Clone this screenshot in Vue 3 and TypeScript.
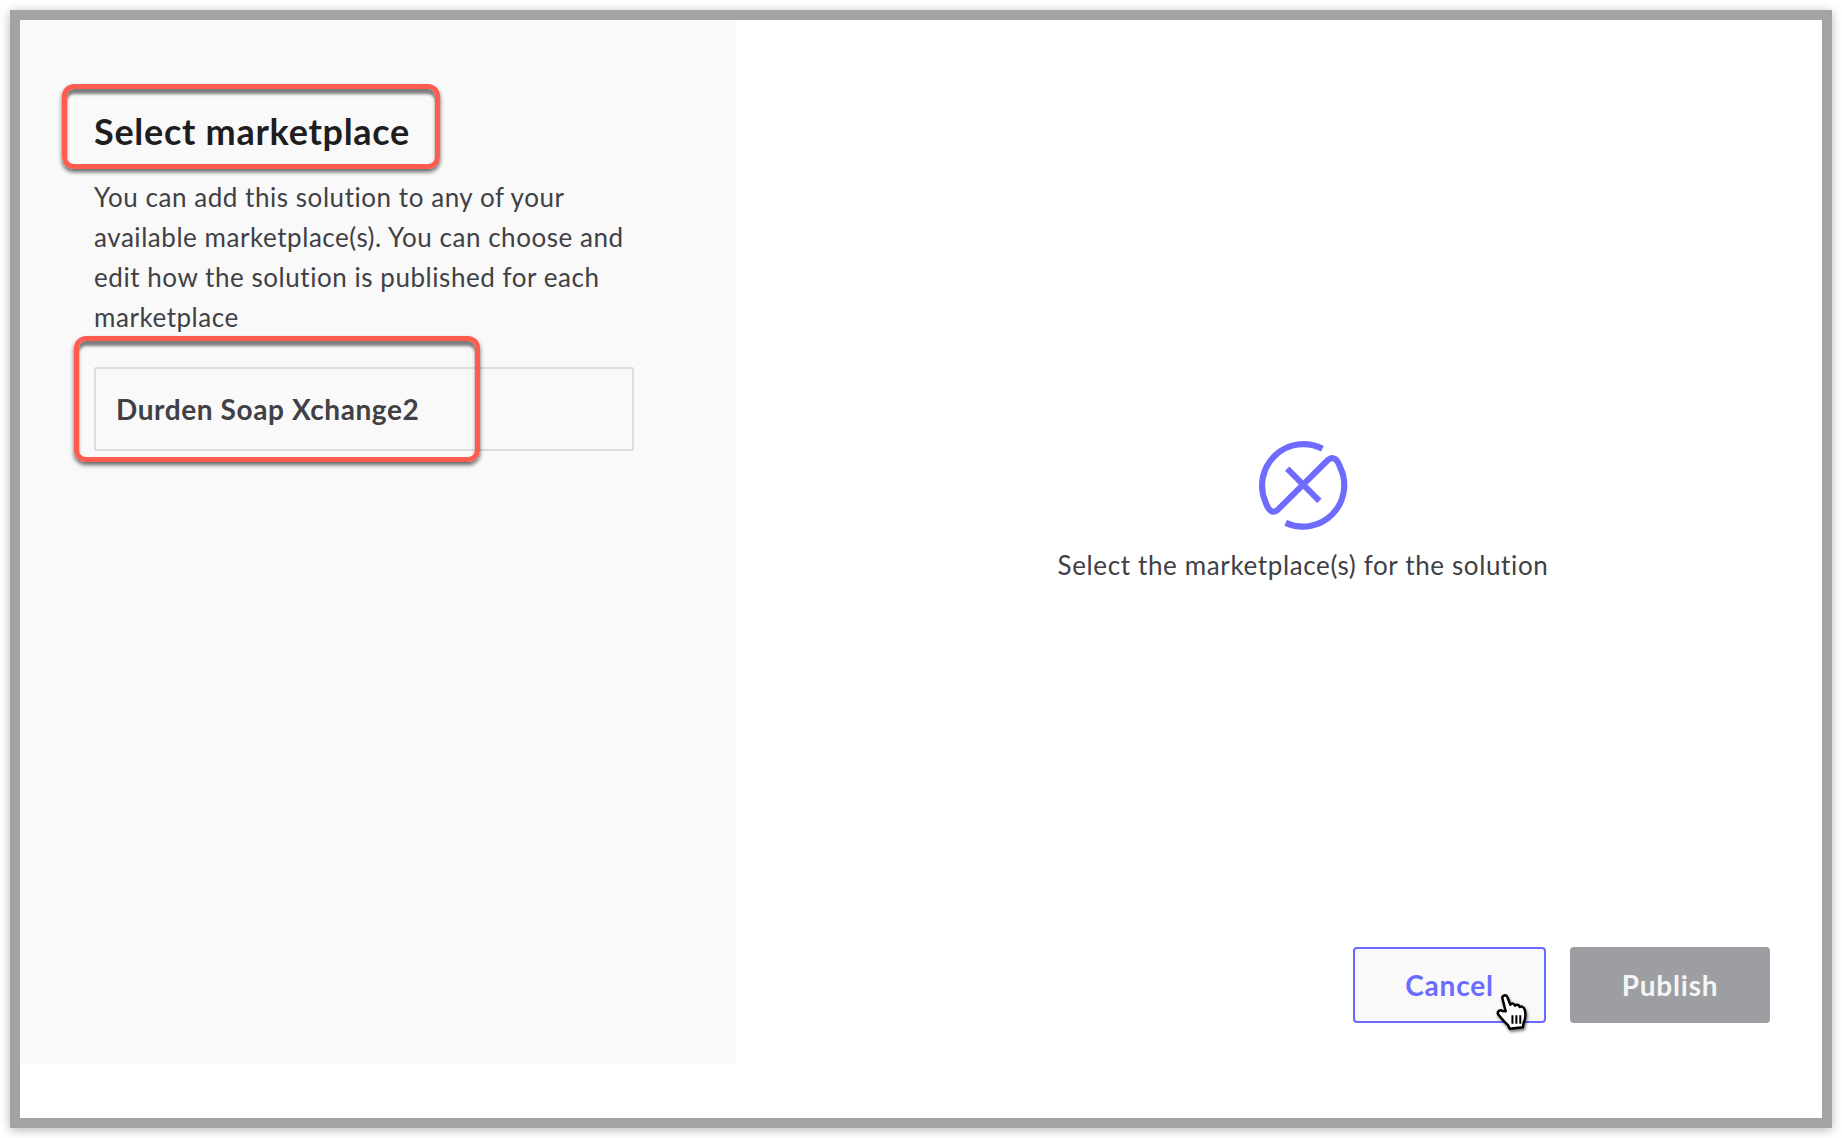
<script setup lang="ts">
const title = 'Select marketplace'
const intro = 'You can add this solution to any of your available marketplace(s). You can choose and edit how the solution is published for each marketplace'
const market = 'Durden Soap Xchange2'
const emptyText = 'Select the marketplace(s) for the solution'
</script>

<template>
  <div class="frame">
    <div class="main">
      <aside class="side">
        <h1 class="title">{{ title }}</h1>
        <p class="intro">{{ intro }}</p>
        <div class="market">{{ market }}</div>
        <div class="callout callout-title"></div>
        <div class="callout callout-market"></div>
      </aside>
      <section class="panel">
        <div class="empty">
          <svg class="empty-icon" viewBox="0 0 88 88" fill="none" stroke="#6f6bff" stroke-width="6">
            <path d="M63 8.5A40.5 40.5 0 0 0 7.5 61Q12 74 19 68.5L69 19Q76 14 80.5 27A40.5 40.5 0 0 1 27 81" />
            <path d="M28.5 28L60 59.5" />
          </svg>
          <div class="empty-text">{{ emptyText }}</div>
        </div>
        <div class="actions">
          <button class="btn btn-cancel" type="button">Cancel</button>
          <button class="btn btn-publish" type="button">Publish</button>
        </div>
        <svg class="cursor" viewBox="0 0 30 33">
          <path d="M8.5 15.5L5.5 3.8C5.2 1 9 .2 10 2.8L12.6 9.6C14 7.8 16.2 8.4 16.8 10.4C18 8.8 20.4 9.4 21 11.6C22.6 10.6 25 11.6 25.6 14.4C26.4 18.6 26.2 22 24.6 25.2L23.8 29.6L12 31L10.6 27.8C8 25.8 4.6 21.6 1.8 18.2C.4 15.8 3.4 13.4 5.6 15.2Z" fill="#fff" stroke="#000" stroke-width="2.2" stroke-linejoin="round" />
          <path d="M14.5 19V26.5M18 19V26.5M21.5 19V26.5" stroke="#000" stroke-width="1.8" fill="none" />
        </svg>
      </section>
    </div>
  </div>
</template>

<style>
html, body { margin: 0; background: #fff; }
</style>

<style scoped>
.frame {
  box-sizing: border-box;
  width: 1822px;
  height: 1118px;
  margin: 10px;
  border: 10px solid #a3a3a3;
  background: #fff;
  box-shadow: 0 2px 10px rgba(0, 0, 0, 0.28);
  font-family: Lato, "Liberation Sans", sans-serif;
  color: #404045;
}
.main {
  display: flex;
  height: 1044px;
}
.side {
  position: relative;
  box-sizing: border-box;
  width: 716px;
  padding: 89px 102px 0 74px;
  background: #f9f9f9;
}
.title {
  margin: 0;
  font-size: 36px;
  line-height: 44px;
  font-weight: 700;
  letter-spacing: 0.72px;
  color: #1e1e20;
}
.intro {
  margin: 24px 0 0;
  font-size: 26px;
  line-height: 40px;
  letter-spacing: 0.55px;
}
.market {
  box-sizing: border-box;
  height: 84px;
  margin-top: 30px;
  padding-left: 20px;
  border: 2px solid #ddd;
  border-radius: 2px;
  font-size: 28px;
  font-weight: 700;
  letter-spacing: 0.6px;
  line-height: 80px;
}
.callout {
  position: absolute;
  box-sizing: border-box;
  border: 5px solid #ff5c50;
  border-radius: 12px;
  box-shadow: 0 3px 4px rgba(0, 0, 0, 0.6), inset 0 5px 3px rgba(0, 0, 0, 0.5);
}
.callout-title { left: 42px; top: 64px; width: 378px; height: 85px; }
.callout-market { left: 54px; top: 316px; width: 406px; height: 126px; }
.panel {
  position: relative;
  flex: 1;
  display: flex;
  flex-direction: column;
  padding: 0 52px 0 100px;
}
.empty {
  display: flex;
  flex-direction: column;
  align-items: center;
  padding-top: 420px;
}
.empty-icon { width: 90px; height: 90px; display: block; }
.empty-text {
  margin-top: 17px;
  font-size: 26px;
  line-height: 36px;
  letter-spacing: 0.63px;
}
.actions {
  display: flex;
  justify-content: flex-end;
  gap: 24px;
  margin-top: auto;
  padding-bottom: 41px;
}
.btn {
  box-sizing: border-box;
  height: 76px;
  border-radius: 4px;
  font-family: inherit;
  font-size: 28px;
  font-weight: 700;
  letter-spacing: 0.8px;
}
.btn-cancel {
  width: 193px;
  border: 2px solid #6b6bff;
  background: #f9f9f9;
  color: #6b6bff;
}
.btn-publish {
  width: 200px;
  border: 0;
  background: #9d9ea2;
  color: #f5f5f5;
}
.cursor {
  position: absolute;
  left: 760px;
  top: 974px;
  width: 34px;
  height: 37px;
  overflow: visible;
  filter: drop-shadow(1px 2px 1.5px rgba(0, 0, 0, 0.55));
}
</style>
